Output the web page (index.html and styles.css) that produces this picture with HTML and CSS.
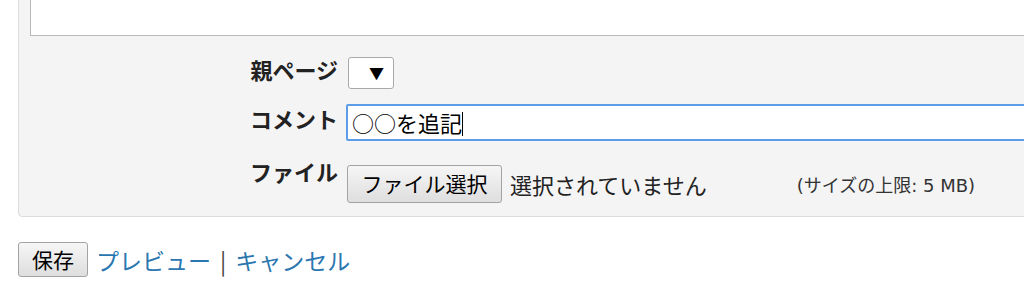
FILE: index.html
```html
<!DOCTYPE html>
<html lang="ja">
<head>
<meta charset="utf-8">
<title>編集</title>
<link rel="stylesheet" href="styles.css">
</head>
<body>
<div class="panel">
  <div class="textarea"></div>
  <div class="form">
    <div class="row row-parent">
      <label class="label">親ページ</label>
      <div class="field"><span class="select">▼</span></div>
    </div>
    <div class="row row-comment">
      <label class="label">コメント</label>
      <div class="field"><div class="input">○○を追記<span class="caret"></span></div></div>
    </div>
    <div class="row row-file">
      <label class="label">ファイル</label>
      <div class="field file-field">
        <span class="btn file-btn">ファイル選択</span>
        <span class="nofile">選択されていません</span>
        <span class="limit">(サイズの上限: 5 MB)</span>
      </div>
    </div>
  </div>
</div>
<div class="actions">
  <span class="btn save-btn">保存</span>
  <a class="link" href="#">プレビュー</a>
  <span class="sep">|</span>
  <a class="link" href="#">キャンセル</a>
</div>
</body>
</html>
```

FILE: styles.css
```css
html, body {
  margin: 0;
  padding: 0;
  background: #ffffff;
  overflow: hidden;
  width: 1024px;
  height: 296px;
}
body {
  font-family: "Noto Sans CJK JP", "Noto Sans", sans-serif;
  color: #222;
}
.panel {
  margin-left: 18px;
  margin-top: -30px;
  width: 1100px;
  height: 247px;
  box-sizing: border-box;
  background: #f4f4f4;
  border: 1px solid #dcdcdc;
  border-radius: 4px;
  padding: 0 0 0 11px;
}
.textarea {
  height: 64px;
  background: #fff;
  border: 1px solid #b8b8b8;
  border-top: none;
}
.form {
  display: flex;
  flex-direction: column;
  padding-top: 19px;
}
.row {
  display: flex;
  align-items: flex-start;
}
.label {
  width: 308px;
  text-align: right;
  font-weight: bold;
  font-size: 22px;
  line-height: 28px;
  color: #222;
  flex: none;
}
.field {
  margin-left: 9px;
  flex: 1;
  display: flex;
  align-items: center;
}
.row-parent { height: 49px; }
.select {
  margin-left: 1px;
  margin-top: 2px;
  width: 46px;
  height: 32px;
  box-sizing: border-box;
  background: #fff;
  border: 1px solid #a9a9a9;
  border-radius: 3px;
  font-size: 15px;
  line-height: 30px;
  text-align: right;
  padding-right: 9px;
  color: #000;
}
.row-comment { height: 57px; }
.input {
  margin-left: -1px;
  width: 720px;
  height: 37px;
  box-sizing: border-box;
  background: #fff;
  border: 2px solid #5b9de8;
  border-radius: 2px;
  font-size: 22px;
  line-height: 33px;
  padding-left: 4px;
  color: #000;
}
.caret {
  display: inline-block;
  width: 1px;
  height: 24px;
  background: #000;
  vertical-align: -4px;
}
.row-file .label { margin-top: -4px; }
.btn {
  display: inline-block;
  box-sizing: border-box;
  background: linear-gradient(#f6f6f6, #dedede);
  border: 1px solid #a3a3a3;
  border-radius: 3px;
  color: #000;
  font-size: 21px;
  text-align: center;
}
.file-btn {
  width: 155px;
  height: 38px;
  line-height: 35px;
  margin-top: 4px;
}
.nofile {
  font-size: 22px;
  margin-left: 8px;
  margin-top: 4px;
  color: #222;
}
.limit {
  font-family: "DejaVu Sans", "Noto Sans CJK JP", sans-serif;
  font-size: 18px;
  margin-left: 90px;
  margin-top: 4px;
  color: #333;
}
.actions {
  margin: 25px 0 0 18px;
  display: flex;
  align-items: center;
  gap: 8px;
  font-size: 23px;
}
.save-btn {
  width: 70px;
  height: 35px;
  line-height: 32px;
  font-size: 21px;
}
.link {
  color: #2a77b0;
  text-decoration: none;
}
.sep {
  color: #444;
  margin: 0 1px;
}
```
